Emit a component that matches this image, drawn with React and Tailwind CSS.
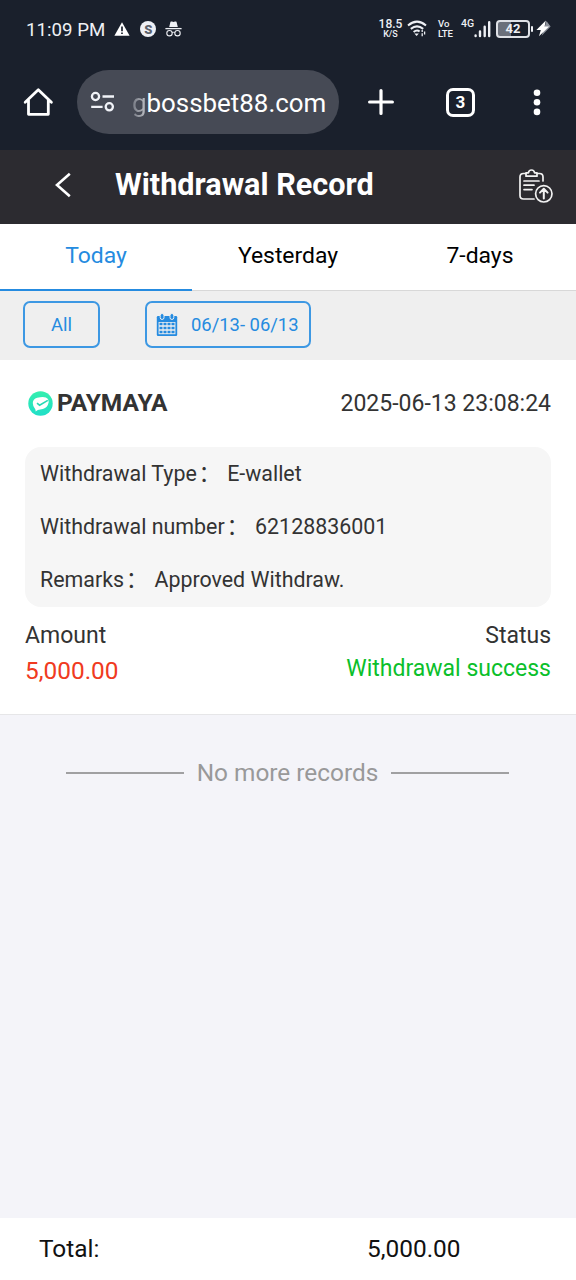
import React, { useState } from "react";

const TABS = ["Today", "Yesterday", "7-days"];

const DETAILS = [
  { label: "Withdrawal Type", value: "E-wallet" },
  { label: "Withdrawal number", value: "62128836001" },
  { label: "Remarks", value: "Approved Withdraw." },
];

function StatusBar() {
  return (
    <div className="flex h-[60px] items-center pl-[26px] pr-[25px] text-[#eef0f5]">
      <span className="text-[18.7px] leading-none">11:09 PM</span>
      <svg className="ml-[9px] h-[16px] w-[16px] -translate-y-px" viewBox="0 0 16 16">
        <path d="M8 1.3 15.6 14.7H.4z" fill="#fff" />
        <path d="M8 5.6v4.6M8 11.4v1.7" stroke="#1a202c" strokeWidth="1.7" />
      </svg>
      <span className="ml-[10px] mb-[2px] flex h-[16px] w-[16px] items-center justify-center rounded-full bg-[#eef0f5] text-[13px] font-black leading-none text-[#5b606b]">
        S
      </span>
      <svg className="ml-[9px] mb-[2px] h-[16px] w-[17px]" viewBox="0 0 17 16" fill="none">
        <path d="M4.2 6 5.5.8Q6 .2 7 .6l1.5.5L10 .6q1-.4 1.5.2L12.8 6z" fill="#eef0f5" />
        <path d="M.4 7.6h16.2" stroke="#eef0f5" strokeWidth="1.3" />
        <circle cx="4.5" cy="12.2" r="2.7" stroke="#eef0f5" strokeWidth="1.1" />
        <circle cx="12.5" cy="12.2" r="2.7" stroke="#eef0f5" strokeWidth="1.1" />
        <path d="M7.2 11.7q1.3-.8 2.6 0" stroke="#eef0f5" />
      </svg>

      <div className="ml-auto mb-[3px] flex items-center">
        <div className="flex w-[23px] flex-col items-center font-medium">
          <span className="text-[12px] leading-[11px]">18.5</span>
          <span className="text-[9px] leading-[9px]">K/S</span>
        </div>
        <svg className="ml-[5px] h-[17px] w-[20px]" viewBox="0 0 20 17" fill="none">
          <g stroke="#eef0f5" strokeWidth="2">
            <path d="M1 5.4q9-7.6 18 0" />
            <path d="M3.8 8.9q6.2-5 12.4 0" />
            <path d="M6.6 12q3.4-2.6 6 -.4" />
          </g>
          <path d="M7.4 13.4h4.4L9.6 16z" fill="#eef0f5" />
          <path d="M15.2 10v2M15.2 13.2v3M17.6 11.5v3" stroke="#eef0f5" strokeWidth="1.3" />
        </svg>
        <div className="ml-[11px] flex w-[16px] flex-col text-[9.6px] font-medium leading-[10px]">
          <span>Vo</span>
          <span className="tracking-[-0.2px]">LTE</span>
        </div>
        <span className="ml-[7px] mb-[9px] w-[13px] text-[10.5px] font-medium leading-none">4G</span>
        <svg className="h-[18px] w-[17px]" viewBox="0 0 17 18">
          <g stroke="#eef0f5" strokeWidth="2.4" strokeLinecap="round">
            <path d="M1.6 15.4v.7M6 11.5v4.6M10.7 6.8v9.3M15.2 2.2v13.9" />
          </g>
        </svg>
        <div className="ml-[5px] flex h-[18px] w-[34px] items-center justify-center rounded-[4px] border-2 border-[#dfe1e6] bg-[linear-gradient(90deg,#6b707b_42%,transparent_42%)] text-[13px] font-bold leading-none">
          42
        </div>
        <span className="ml-px h-[6px] w-[2px] rounded-sm bg-[#eef0f5]" />
        <svg className="ml-[3px] h-[17px] w-[15px]" viewBox="0 0 15 17">
          <path d="M10.5 1 14.6 6.4 5.6 15.7l2-5.8z" fill="#8c919b" />
          <path d="M9.8.6.4 9.9h4.4L3 16.2 13 6.6H8.6z" fill="#fff" />
        </svg>
      </div>
    </div>
  );
}

function BrowserBar() {
  return (
    <div className="flex h-[90px] items-start pt-[10px] text-white">
      <svg className="ml-[23px] mt-[17px] h-[31px] w-[31px]" viewBox="0 0 31 31" fill="none">
        <path
          d="M2.2 15.2 15.3 2.8l13.1 12.4M5.5 13v14.3h19.8V13"
          stroke="#fff"
          strokeWidth="2.8"
          strokeLinecap="round"
          strokeLinejoin="round"
        />
      </svg>
      <div className="ml-[23px] flex h-[64px] w-[262px] items-center rounded-full bg-[#464a55] pl-[13px]">
        <svg className="h-[22px] w-[25px]" viewBox="0 0 25 22" fill="none">
          <g stroke="#f1f3f8" strokeWidth="2.3">
            <circle cx="5.5" cy="5.5" r="3.6" />
            <circle cx="19.3" cy="15.8" r="3.6" />
            <path d="M12.5 5.5H24M1.2 15.8h11.4" />
          </g>
        </svg>
        <span className="ml-[17px] mt-[2px] whitespace-nowrap text-[25.9px] leading-[34px]">
          <span className="bg-[linear-gradient(90deg,#747882,#c3c5ca)] bg-clip-text text-transparent">g</span>
          bossbet88.com
        </span>
      </div>
      <svg className="ml-[28px] mt-[18px] h-[28px] w-[28px]" viewBox="0 0 28 28">
        <path d="M14 2.6v22.8M2.6 14h22.8" stroke="#fff" strokeWidth="3.2" strokeLinecap="round" />
      </svg>
      <div className="ml-[51px] mt-[18px] flex h-[29px] w-[29px] items-center justify-center rounded-[7px] border-[3px] border-white text-[17px] font-bold leading-none">
        3
      </div>
      <svg className="ml-[57px] mt-[18px] h-[28px] w-[10px]" viewBox="0 0 10 28" fill="#fff">
        <circle cx="5" cy="4.7" r="3.3" />
        <circle cx="5" cy="14.3" r="3.3" />
        <circle cx="5" cy="23.9" r="3.3" />
      </svg>
    </div>
  );
}

function PageHeader() {
  return (
    <div className="flex h-[74px] items-center bg-[#2c2b30] pb-[4px] pr-[23px] text-white">
      <svg className="ml-[53px] h-[28px] w-[20px]" viewBox="0 0 20 28" fill="none">
        <path d="M16.8 2.8 4 14l12.8 11.2" stroke="#fff" strokeWidth="2.6" />
      </svg>
      <h1 className="ml-[42px] whitespace-nowrap text-[30.6px] font-bold leading-[40px]">
        Withdrawal Record
      </h1>
      <svg className="ml-auto mt-[2px] h-[34px] w-[34px]" viewBox="0 0 34 34" fill="none">
        <g stroke="#f2f2f2" strokeWidth="1.7" strokeLinecap="round" strokeLinejoin="round">
          <path d="M7 4.5H4.5Q1 4.5 1 8v18.5Q1 30 4.5 30H15" />
          <path d="M18 4.5h2.5Q24 4.5 24 8v4" />
          <path d="M7 3.8h2.4Q9.8 1 12.5 1T15.6 3.8H18v3.4H7z" />
          <path d="M5 12h15M5 16.2h10M5 20.6h8" />
          <circle cx="24.8" cy="24.8" r="8.2" />
          <path d="M24.8 29.4V20M21 23.6l3.8-3.8 3.8 3.8" strokeWidth="2" />
        </g>
      </svg>
    </div>
  );
}

function CalendarIcon() {
  return (
    <svg className="h-[24px] w-[22px]" viewBox="0 0 22 24">
      <path d="M2 3h18q1.2 0 1.2 1.2v17.6q0 1.2-1.2 1.2H2Q.8 23 .8 21.8V4.2Q.8 3 2 3z" fill="#258be0" />
      <path d="M2.6 9h16.8v12.2H2.6z" fill="#efefef" />
      <path
        d="M3.5 11h3M7.5 11h3M11.5 11h3M15.5 11h3M3.5 15h3M7.5 15h3M11.5 15h3M15.5 15h3M3.5 19h3M7.5 19h3M11.5 19h3M15.5 19h3"
        stroke="#258be0"
        strokeWidth="2.7"
      />
      <rect x="4.2" y="0.5" width="3.8" height="6" rx="1.9" fill="#258be0" stroke="#efefef" />
      <rect x="14" y="0.5" width="3.8" height="6" rx="1.9" fill="#258be0" stroke="#efefef" />
    </svg>
  );
}

function MayaLogo() {
  return (
    <svg className="h-[25px] w-[25px]" viewBox="0 0 25 25" fill="none">
      <defs>
        <linearGradient id="maya" x1="0" y1="0" x2="0" y2="1">
          <stop stopColor="#35efae" />
          <stop offset="1" stopColor="#20dfc8" />
        </linearGradient>
      </defs>
      <circle cx="12.5" cy="12.5" r="12.2" fill="url(#maya)" />
      <path d="M4.8 12q0-4 4.4-5.2 8.2-2 10.8 1.2 1.5 2.5-.2 6-1.7 3.6-7.6 4.6-2.5.2-4.6 1.8.2-1.3-.5-2.3Q4.9 15.8 4.8 12z" fill="#fff" />
      <path d="m9 12.2 2.6 2 8.2-4.8" stroke="#27d9b4" strokeWidth="1.6" />
    </svg>
  );
}

function RecordCard() {
  return (
    <div className="h-[355px] border-b border-[#e6e6e8] bg-white px-[25px] text-[23px] text-[#333]">
      <div className="flex h-[87px] items-center justify-between">
        <div className="flex items-center pl-[3px]">
          <MayaLogo />
          <span className="ml-[4px] text-[24.5px] font-bold">PAYMAYA</span>
        </div>
        <span className="pt-px">2025-06-13 23:08:24</span>
      </div>

      <div className="flex h-[160px] flex-col rounded-[16px] bg-[#f6f6f6] pl-[15px] text-[21.4px]">
        {DETAILS.map((item) => (
          <div key={item.label} className="flex h-[53.7px] items-center whitespace-nowrap">
            <span>{item.label}</span>
            <span className="ml-[2px]">：</span>
            <span className="ml-[7px]">{item.value}</span>
          </div>
        ))}
      </div>

      <div className="mt-[11px] flex h-[36px] items-center justify-between">
        <span>Amount</span>
        <span>Status</span>
      </div>
      <div className="flex h-[34px] items-center justify-between">
        <span className="text-[24.4px] text-[#f03a21]">5,000.00</span>
        <span className="mb-[3px] text-[#0bbf2b]">Withdrawal success</span>
      </div>
    </div>
  );
}

export default function App() {
  const [tab, setTab] = useState("Today");

  return (
    <div className="flex h-[1280px] w-[576px] flex-col overflow-hidden bg-[#f4f4f9] font-[Roboto,'Noto_Sans_CJK_SC',sans-serif]">
      <div className="bg-[#1a202c]">
        <StatusBar />
        <BrowserBar />
      </div>
      <PageHeader />

      <div className="grid h-[67px] grid-cols-3 bg-white">
        {TABS.map((name) => (
          <button
            key={name}
            onClick={() => setTab(name)}
            className={
              name === tab
                ? "border-b-2 border-[#258be0] pb-px text-[22.9px] text-[#258be0]"
                : "border-b border-[#d8d8d8] pb-[2px] text-[22.9px] text-black"
            }
          >
            {name}
          </button>
        ))}
      </div>

      <div className="flex h-[69px] bg-[#efefef] pl-[23px] pt-[10px] text-[18.4px] text-[#258be0]">
        <button className="h-[47px] w-[77px] rounded-[7px] border-2 border-[#3d98e3] pt-px">All</button>
        <button className="ml-[45px] flex h-[47px] w-[166px] items-center rounded-[7px] border-2 border-[#3d98e3] pl-[9px]">
          <CalendarIcon />
          <span className="ml-[13px] whitespace-nowrap">06/13- 06/13</span>
        </button>
      </div>

      <RecordCard />

      <div className="mt-[40px] flex items-center px-[66px] text-[24.4px] leading-[36px] text-[#999]">
        <span className="h-[2px] w-[118px] bg-[#a0a0a2]" />
        <span className="flex-1 whitespace-nowrap text-center">No more records</span>
        <span className="mr-px h-[2px] w-[118px] bg-[#a0a0a2]" />
      </div>

      <div className="mt-auto flex h-[62px] items-center bg-white text-[24.4px] text-[#111]">
        <span className="w-[328px] pl-[39px]">Total:</span>
        <span className="pl-[39px]">5,000.00</span>
      </div>
    </div>
  );
}
